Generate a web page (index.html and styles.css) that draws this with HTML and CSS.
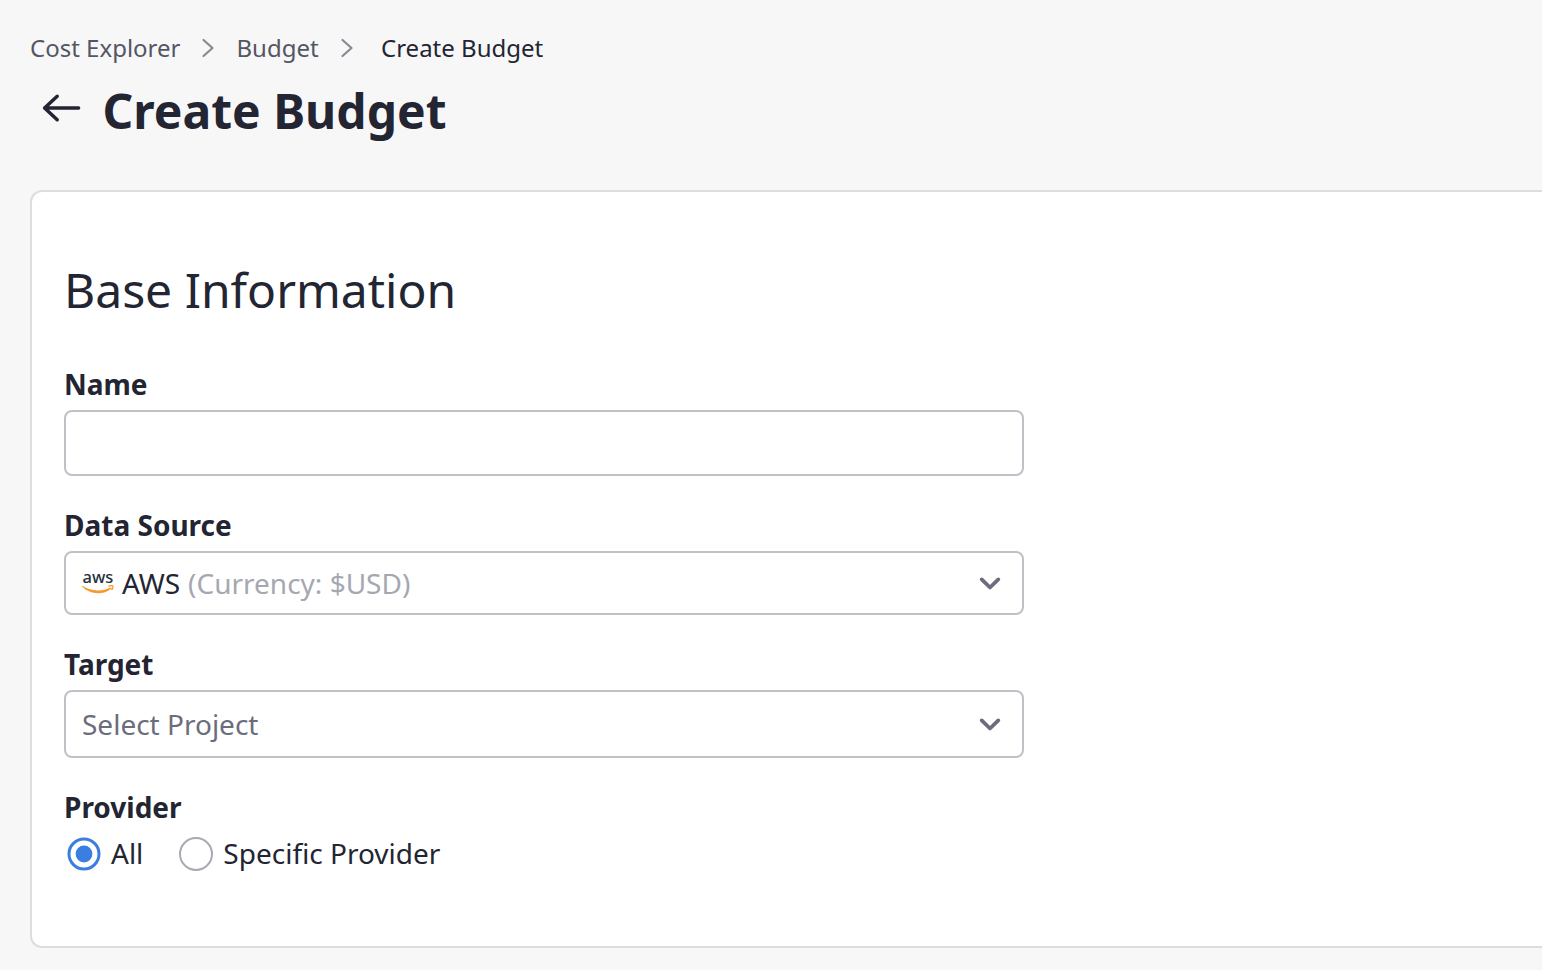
FILE: index.html
```html
<!DOCTYPE html>
<html lang="en">
<head>
<meta charset="utf-8">
<title>Create Budget</title>
<link rel="stylesheet" href="styles.css">
</head>
<body>
<main class="page">
  <nav class="breadcrumb">
    <a class="crumb crumb-first">Cost Explorer</a>
    <svg class="crumb-sep" width="14" height="20" viewBox="0 0 14 20"><path d="M2.5 2 L11.5 10 L2.5 18"/></svg>
    <a class="crumb crumb-second">Budget</a>
    <svg class="crumb-sep" width="14" height="20" viewBox="0 0 14 20"><path d="M2.5 2 L11.5 10 L2.5 18"/></svg>
    <span class="crumb crumb-current">Create Budget</span>
  </nav>
  <header class="heading">
    <svg class="back" width="40" height="30" viewBox="0 0 40 30"><path d="M36.6 15 H3 M15.2 3.3 L2.6 15 L15.2 26.7"/></svg>
    <h1 class="title">Create Budget</h1>
  </header>
  <section class="card">
    <h2 class="card-title">Base Information</h2>
    <form class="form">
      <div class="field">
        <label class="label" for="name">Name</label>
        <input class="control control-name" id="name" type="text">
      </div>
      <div class="field">
        <span class="label">Data Source</span>
        <div class="control control-source">
          <svg class="aws" width="32" height="32" viewBox="0 0 32 32">
            <text class="aws-text" x="0.5" y="16">aws</text>
            <path class="aws-smile" d="M0.3 18.8 C8 24.2 20 25 28.4 20.6 C29.5 20.1 30.1 21.1 29.2 21.8 C21 28.6 7.5 27.6 0.1 19.6 Z"/>
            <path class="aws-tip" d="M26.4 19.3 C28 18.5 30.6 18.5 30.9 18.9 C31.2 19.6 30.6 21.9 29.5 23"/>
          </svg>
          <span class="value">AWS <span class="currency">(Currency: $USD)</span></span>
          <svg class="chevron" width="24" height="16" viewBox="0 0 24 16"><path d="M3.7 4.4 L12 12.5 L20.3 4.4"/></svg>
        </div>
      </div>
      <div class="field">
        <span class="label">Target</span>
        <div class="control control-target">
          <span class="placeholder">Select Project</span>
          <svg class="chevron" width="24" height="16" viewBox="0 0 24 16"><path d="M3.7 4.4 L12 12.5 L20.3 4.4"/></svg>
        </div>
      </div>
      <div class="field">
        <span class="label">Provider</span>
        <div class="radios">
          <span class="radio">
            <svg class="radio-mark" width="34" height="34" viewBox="0 0 34 34"><circle class="ring-on" cx="17" cy="17" r="15"/><circle class="dot" cx="17" cy="17" r="8.4"/></svg>
            All
          </span>
          <span class="radio">
            <svg class="radio-mark" width="34" height="34" viewBox="0 0 34 34"><circle class="ring-off" cx="17" cy="17" r="16"/></svg>
            Specific Provider
          </span>
        </div>
      </div>
    </form>
  </section>
</main>
</body>
</html>
```
FILE: styles.css
```css
* { box-sizing: border-box; }
body {
  margin: 0;
  height: 970px;
  overflow: hidden;
  background: #f7f7f7;
  color: #232533;
  font-family: "Noto Sans", sans-serif;
}
svg { display: block; flex: none; fill: none; }
.page { padding: 30px 0 0 30px; }
.breadcrumb {
  display: flex;
  align-items: center;
  height: 36px;
  font-size: 24px;
  line-height: 36px;
  white-space: nowrap;
}
.crumb { color: #545665; }
.crumb-first { width: 171px; }
.crumb-second { width: 103px; margin-left: 21.5px; }
.crumb-current { margin-left: 27.5px; color: #232533; }
.crumb-sep { stroke: #898995; stroke-width: 2.2; stroke-linecap: round; stroke-linejoin: round; }
.heading { display: flex; align-items: center; height: 60px; margin-top: 15px; padding-left: 12px; }
.back { margin: -6px 20.5px 0 0; stroke: #232533; stroke-width: 3.5; stroke-linecap: round; stroke-linejoin: round; }
.title { margin: 0; font-size: 48px; line-height: 60px; font-weight: 700; }
.card {
  height: 758px;
  margin-top: 49px;
  padding: 68px 0 0 32px;
  background: #fff;
  border: 2px solid #dddddf;
  border-right: 0;
  border-radius: 12px 0 0 12px;
}
.card-title { margin: 0 0 46px; font-size: 48px; line-height: 60px; font-weight: 400; }
.form { display: flex; flex-direction: column; gap: 31px; width: 960px; }
.field { display: flex; flex-direction: column; }
.label { margin-bottom: 8px; font-size: 28px; line-height: 36px; font-weight: 700; }
.control {
  display: flex;
  align-items: center;
  width: 100%;
  padding: 0 20px 0 16px;
  background: #fff;
  border: 2px solid #c0c0c6;
  border-radius: 8px;
  font: inherit;
  font-size: 28px;
  line-height: 36px;
  white-space: nowrap;
}
.control-name { height: 66px; }
.control-source { height: 64px; }
.control-target { height: 68px; }
.aws { margin-right: 8px; overflow: visible; }
.aws-text { fill: #252f3e; font-size: 16.5px; font-weight: 500; }
.aws-smile { fill: #f79a2e; }
.aws-tip { stroke: #f79a2e; stroke-width: 1.4; }
.currency { margin-left: 0.6px; color: #a5a8b0; }
.placeholder { color: #6b6d7c; }
.chevron { margin-left: auto; stroke: #6b6d7c; stroke-width: 3.8; stroke-linecap: round; stroke-linejoin: round; }
.radios { display: flex; gap: 36px; padding: 2px 0 0 3px; font-size: 28px; line-height: 36px; }
.radio { display: flex; align-items: center; gap: 10px; }
.radio-mark { margin-top: 2px; }
.ring-on { stroke: #3a7ee0; stroke-width: 3; }
.dot { fill: #3a7ee0; }
.ring-off { stroke: #a8aab2; stroke-width: 2; }
```
